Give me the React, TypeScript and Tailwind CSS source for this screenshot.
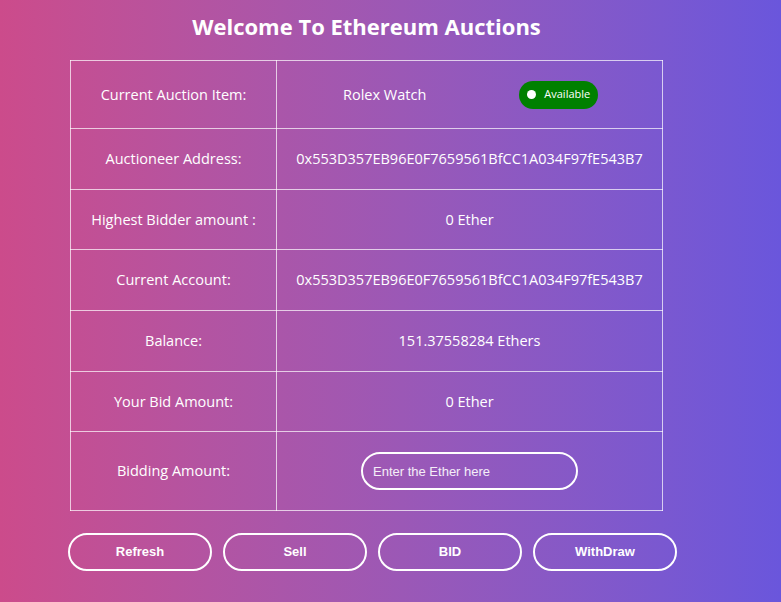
import React from "react";

const rows = [
  { label: "Auctioneer Address:", value: "0x553D357EB96E0F7659561BfCC1A034F97fE543B7", h: "h-[61px]" },
  { label: "Highest Bidder amount :", value: "0 Ether", h: "h-[60px]" },
  { label: "Current Account:", value: "0x553D357EB96E0F7659561BfCC1A034F97fE543B7", h: "h-[61px]" },
  { label: "Balance:", value: "151.37558284 Ethers", h: "h-[61px]" },
  { label: "Your Bid Amount:", value: "0 Ether", h: "h-[60px]" },
];

const buttons = ["Refresh", "Sell", "BID", "WithDraw"];

const App = () => {
  return (
    <div
      className="min-h-[602px] w-full bg-gradient-to-r from-[#cc4b8b] to-[#6a56dc] text-white"
      style={{ fontFamily: '"Open Sans", "Noto Sans", sans-serif' }}
    >
      <div className="ml-[70px] w-[593px] pt-[9px]">
        <h1 className="text-center text-[22px] font-bold leading-[34px] tracking-[0px]">
          Welcome To Ethereum Auctions
        </h1>
        <table className="mt-[17px] w-[593px] border-collapse text-[14.5px]">
          <tbody>
            <tr className="h-[68px]">
              <td className="w-[206px] border border-white/70 text-center">Current Auction Item:</td>
              <td className="border border-white/70">
                <div className="flex items-center pl-[66px]">
                  <span>Rolex Watch</span>
                  <span className="ml-[93px] flex h-[28px] items-center rounded-full bg-[#008000] pl-[8px] pr-[8px] text-[11px]">
                    <span className="mr-[8px] h-[9px] w-[9px] rounded-full bg-white" />
                    Available
                  </span>
                </div>
              </td>
            </tr>
            {rows.map((r) => (
              <tr key={r.label} className={r.h}>
                <td className="border border-white/70 text-center">{r.label}</td>
                <td className="border border-white/70 text-center">{r.value}</td>
              </tr>
            ))}
            <tr className="h-[79px]">
              <td className="border border-white/70 text-center">Bidding Amount:</td>
              <td className="border border-white/70">
                <div className="flex justify-center">
                  <input
                    placeholder="Enter the Ether here"
                    className="h-[38px] w-[217px] rounded-full border-2 border-white bg-transparent px-[10px] text-[13px] text-white outline-none placeholder:text-white/90"
                    style={{ fontFamily: '"Liberation Sans", Arial, sans-serif' }}
                  />
                </div>
              </td>
            </tr>
          </tbody>
        </table>
      </div>
      <div className="ml-[68px] mt-[22px] flex gap-[11px]">
        {buttons.map((b) => (
          <button
            key={b}
            className="h-[38px] w-[144px] rounded-full border-2 border-white bg-transparent text-[13px] font-bold text-white"
            style={{ fontFamily: '"Liberation Sans", Arial, sans-serif' }}
          >
            {b}
          </button>
        ))}
      </div>
    </div>
  );
};

export default App;
